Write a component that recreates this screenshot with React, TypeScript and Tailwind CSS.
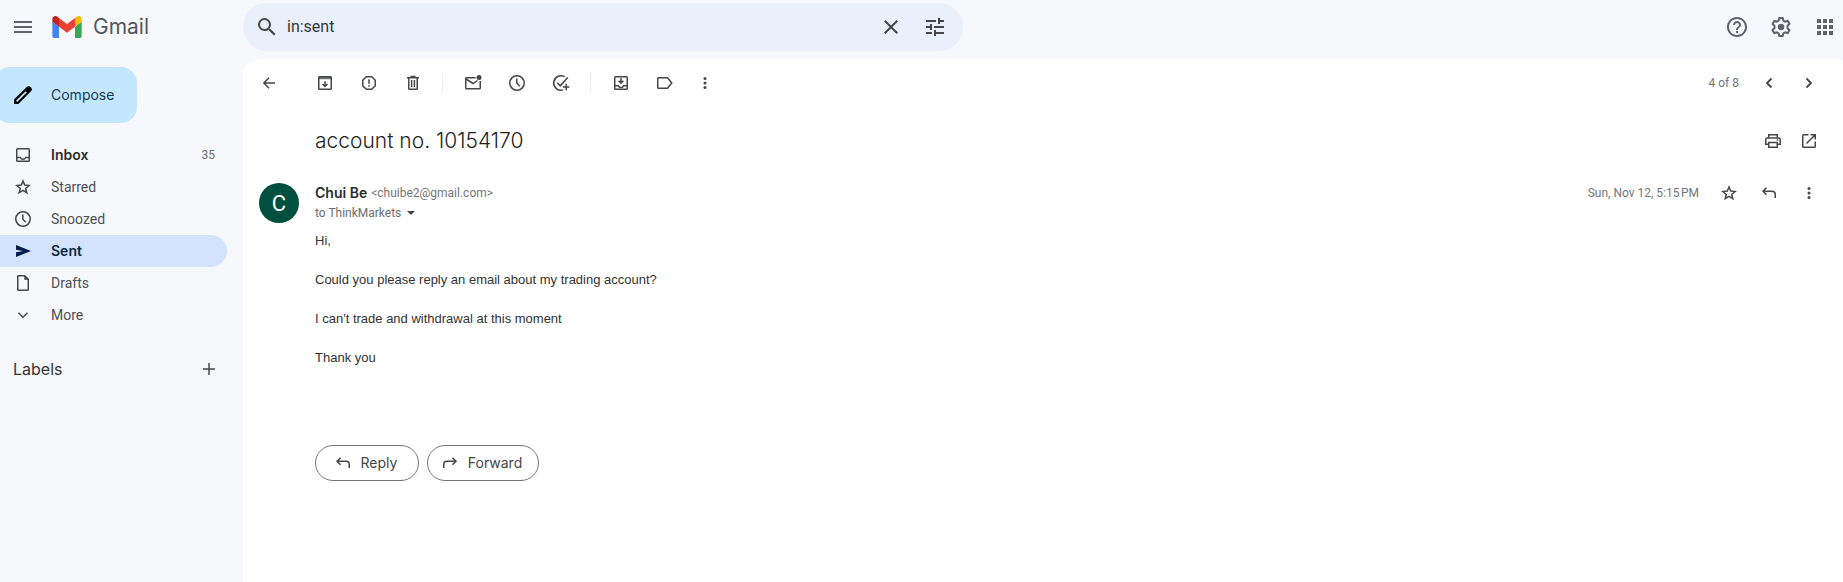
import React, { useState } from "react";
import {
  MdApps,
  MdClose,
  MdMenu,
  MdSearch,
  MdTune,
  MdHelpOutline,
} from "react-icons/md";

const Icon = ({ children }: { children: React.ReactNode }) => (
  <svg
    viewBox="0 0 20 20"
    className="size-5 shrink-0"
    fill="none"
    stroke="currentColor"
    strokeWidth="1.5"
    aria-hidden="true"
  >
    {children}
  </svg>
);

const GmailLogo = () => (
  <svg viewBox="52 42 88 66" className="w-[30px] h-[22px]" aria-hidden="true">
    <path fill="#4285f4" d="M58 108h14V74L52 59v43c0 3.32 2.69 6 6 6" />
    <path fill="#34a853" d="M120 108h14c3.32 0 6-2.69 6-6V59l-20 15" />
    <path fill="#fbbc04" d="M120 48v26l20-15v-8c0-7.42-8.47-11.65-14.4-7.2" />
    <path fill="#ea4335" d="M72 74V48l24 18 24-18v26L96 92" />
    <path fill="#c5221f" d="M52 51v8l20 15V48l-5.6-4.2c-5.94-4.45-14.4-.22-14.4 7.2" />
  </svg>
);

const PencilIcon = () => (
  <svg viewBox="0 0 24 24" className="size-6" aria-hidden="true">
    <path d="M3 21v-4.4L16.2 3.6a2 2 0 0 1 2.8 0l1.4 1.4a2 2 0 0 1 0 2.8L7.4 21z" fill="#000" />
    <path d="M5.6 18.4 15.2 8.8" stroke="#c2e7ff" strokeWidth="1.7" />
  </svg>
);

const SettingsIcon = () => (
  <svg viewBox="0 0 24 24" className="size-6" fill="none" stroke="currentColor" strokeWidth="2" aria-hidden="true">
    <path
      strokeLinejoin="round"
      d="M10.2 3h3.6l.5 2.6 1.9 1.1 2.5-.9 1.8 3.1-2 1.8v2.6l2 1.8-1.8 3.1-2.5-.9-1.9 1.1-.5 2.6h-3.6l-.5-2.6-1.9-1.1-2.5.9-1.8-3.1 2-1.8v-2.6l-2-1.8 1.8-3.1 2.5.9 1.9-1.1z"
    />
    <circle cx="12" cy="12" r="3.3" fill="currentColor" stroke="none" />
  </svg>
);

const InboxIcon = () => (
  <Icon>
    <rect x="3.75" y="3.75" width="12.5" height="12.5" rx="0.8" />
    <path d="M4 12.5h3.3c.5 1.2 1.5 1.8 2.7 1.8s2.2-.6 2.7-1.8H16" />
  </Icon>
);

const StarIcon = () => (
  <Icon>
    <path d="m10 4 1.7 4.1 4.4.4-3.4 2.9 1.1 4.3-3.8-2.3-3.8 2.3 1.1-4.3-3.4-2.9 4.4-.4z" />
  </Icon>
);

const ClockIcon = () => (
  <Icon>
    <circle cx="10" cy="10" r="7.25" />
    <path d="M9.8 5.5v4.8l3 3" />
  </Icon>
);

const SentIcon = () => (
  <Icon>
    <path d="M3 4v4.7L10 10l-7 1.3V16l15-6z" fill="currentColor" stroke="none" />
  </Icon>
);

const DraftIcon = () => (
  <Icon>
    <path d="M4.75 3.5c0-.4.3-.75.75-.75h6.2l3.55 3.6V16.5c0 .4-.3.75-.75.75h-9c-.4 0-.75-.3-.75-.75z" />
    <path d="M11.3 2.5v4.3h4.3z" fill="currentColor" stroke="none" />
  </Icon>
);

const ChevronDownIcon = () => (
  <Icon>
    <path d="m5.5 7.7 4.5 4.5 4.5-4.5" />
  </Icon>
);

const PlusIcon = () => (
  <Icon>
    <path d="M10 4v12M4 10h12" />
  </Icon>
);

const BackIcon = () => (
  <Icon>
    <path d="M16 10H5.2M10 4.7 4.9 10l5.1 5.3" />
  </Icon>
);

const ArchiveIcon = () => (
  <Icon>
    <rect x="3.75" y="3.75" width="12.5" height="12.5" rx="0.8" />
    <path d="M3.5 5h13" strokeWidth="2.5" opacity="0.75" />
    <path d="M10 8.2v5M7.5 11l2.5 2.5 2.5-2.5" />
  </Icon>
);

const SpamIcon = () => (
  <Icon>
    <path d="M7.3 3.75h5.4l3.55 3.55v5.4l-3.55 3.55H7.3L3.75 12.7V7.3z" strokeLinejoin="round" />
    <path d="M10 6.2v4.6M10 12.2v1.5" />
  </Icon>
);

const TrashIcon = () => (
  <Icon>
    <path d="M4 4.75h12M7.5 3.6h5" />
    <path d="M5.75 5v10.5c0 .4.3.75.75.75h7c.4 0 .75-.3.75-.75V5M8.6 7v7M11.4 7v7" />
  </Icon>
);

const MarkUnreadIcon = () => (
  <Icon>
    <path d="M12.5 4.75h-9c-.4 0-.75.3-.75.75V15c0 .4.3.75.75.75h13c.4 0 .75-.3.75-.75V8" />
    <path d="m3 6 7 4.5L14.5 7.5" />
    <circle cx="16" cy="4.5" r="2.5" fill="currentColor" stroke="none" />
  </Icon>
);

const AddTaskIcon = () => (
  <Icon>
    <path d="M13.6 3.7a7.25 7.25 0 1 0-1.5 13.2M6.2 9.8l3 3 7.6-8.4M15.2 10.8v6.4M12 14h6.4" />
  </Icon>
);

const MoveToIcon = () => (
  <Icon>
    <rect x="3.75" y="3.75" width="12.5" height="12.5" rx="0.8" />
    <path d="M4 12.75h3.3c.5 1.2 1.5 1.8 2.7 1.8s2.2-.6 2.7-1.8H16M10 5v4.5M7.6 7.7l2.4 2.4 2.4-2.4" />
  </Icon>
);

const LabelIcon = () => (
  <Icon>
    <path d="M3.5 4.75h9L16.75 10l-4.25 5.25h-9c-.4 0-.75-.3-.75-.75v-9c0-.4.3-.75.75-.75z" />
  </Icon>
);

const MoreIcon = () => (
  <Icon>
    <g fill="currentColor" stroke="none">
      <circle cx="10" cy="5.5" r="1.5" />
      <circle cx="10" cy="10" r="1.5" />
      <circle cx="10" cy="14.5" r="1.5" />
    </g>
  </Icon>
);

const PrevIcon = () => (
  <Icon>
    <path d="M12.5 5.5 8 10l4.5 4.5" strokeWidth="1.8" />
  </Icon>
);

const NextIcon = () => (
  <Icon>
    <path d="m7.5 5.5 4.5 4.5-4.5 4.5" strokeWidth="1.8" />
  </Icon>
);

const PrintIcon = () => (
  <Icon>
    <path d="M5.75 7V3.75h8.5V7M5.5 13.25H2.75V8.5c0-.8.6-1.5 1.5-1.5h11.5c.9 0 1.5.7 1.5 1.5v4.75H14.5" />
    <path d="M5.75 11.5h8.5v4.75h-8.5z" />
    <path d="M13.8 9h1.5" />
  </Icon>
);

const OpenIcon = () => (
  <Icon>
    <path d="M9.5 3.75h-5c-.4 0-.75.3-.75.75v11c0 .4.3.75.75.75h11c.4 0 .75-.3.75-.75v-5M11.5 3.75h4.75V8.5M16 4l-8.5 8.5" />
  </Icon>
);

const ReplyIcon = () => (
  <Icon>
    <path d="M7.5 4.7 4 8.25l3.5 3.55M4 8.25h9c2 0 3.25 1.3 3.25 3.25V15" />
  </Icon>
);

const ForwardIcon = () => (
  <Icon>
    <path d="M12.5 4.7 16 8.25l-3.5 3.55M16 8.25H7c-2 0-3.25 1.3-3.25 3.25V15" />
  </Icon>
);

const folders = [
  { name: "Inbox", icon: <InboxIcon />, count: 35 },
  { name: "Starred", icon: <StarIcon /> },
  { name: "Snoozed", icon: <ClockIcon /> },
  { name: "Sent", icon: <SentIcon /> },
  { name: "Drafts", icon: <DraftIcon /> },
  { name: "More", icon: <ChevronDownIcon /> },
];

const message = [
  "Hi,",
  "Could you please reply an email about my trading account?",
  "I can't trade and withdrawal at this moment",
  "Thank you",
];

function IconButton({ label, children }: { label: string; children: React.ReactNode }) {
  return (
    <button type="button" aria-label={label} className="flex shrink-0 text-[#444746]">
      {children}
    </button>
  );
}

function Header() {
  const [query, setQuery] = useState("in:sent");

  return (
    <header className="flex items-center pt-[3px] pb-2 pr-[6px] text-[#5f6368]">
      <div className="flex items-center w-[243px] shrink-0 pl-[11px]">
        <button type="button" aria-label="Main menu">
          <MdMenu className="size-6" />
        </button>
        <a href="#" className="flex items-center gap-[11px] ml-[17px]">
          <GmailLogo />
          <span className="font-['Inter',sans-serif] text-[21px] leading-6 text-[#54585c]">Gmail</span>
        </a>
      </div>
      <form
        className="flex items-center h-12 w-full max-w-[720px] pl-3 pr-4 rounded-full bg-[#e9f0fb] text-[#444746]"
        onSubmit={(e) => e.preventDefault()}
      >
        <button type="submit" aria-label="Search">
          <MdSearch className="size-6" />
        </button>
        <input
          type="text"
          aria-label="Search mail"
          value={query}
          onChange={(e) => setQuery(e.target.value)}
          className="flex-1 min-w-0 ml-2 bg-transparent outline-none text-base text-[#333638]"
        />
        <button type="button" aria-label="Clear search" onClick={() => setQuery("")}>
          <MdClose className="size-6" />
        </button>
        <button type="button" aria-label="Show search options" className="ml-5">
          <MdTune className="size-6" />
        </button>
      </form>
      <div className="flex items-center gap-5 ml-auto pl-5">
        <button type="button" aria-label="Support">
          <MdHelpOutline className="size-6" />
        </button>
        <button type="button" aria-label="Settings">
          <SettingsIcon />
        </button>
        <button type="button" aria-label="Google apps">
          <MdApps className="size-6" />
        </button>
      </div>
    </header>
  );
}

function Sidebar() {
  return (
    <aside className="w-[243px] shrink-0 pt-2 pr-4">
      <button
        type="button"
        className="flex items-center gap-4 h-14 -ml-[6px] pl-[17px] pr-[23px] rounded-2xl bg-[#c2e7ff] font-['Inter',sans-serif] text-sm text-[#1b3850]"
      >
        <PencilIcon />
        Compose
      </button>
      <nav className="mt-4">
        {folders.map(({ name, icon, count }) => (
          <a
            key={name}
            href="#"
            className={`flex items-center gap-[18px] h-8 pl-[13px] pr-3 rounded-r-full text-sm ${
              name === "Sent"
                ? "bg-[#d3e3fd] text-[#0b2545] font-semibold font-['Inter',sans-serif]"
                : count
                ? "text-[#2a2b2d] font-semibold font-['Inter',sans-serif]"
                : "text-[#4d5053]"
            }`}
          >
            <span className={name === "Sent" ? "text-[#041e49]" : "text-[#444746]"}>{icon}</span>
            {name}
            {count && (
              <span className="ml-auto text-xs font-normal text-[#6b6e71] font-['Roboto',sans-serif]">{count}</span>
            )}
          </a>
        ))}
      </nav>
      <div className="flex items-center justify-between h-8 mt-[22px] pl-[13px] pr-2">
        <h2 className="font-['Inter',sans-serif] text-base text-[#333638]">Labels</h2>
        <IconButton label="Create new label">
          <PlusIcon />
        </IconButton>
      </div>
    </aside>
  );
}

function Toolbar() {
  return (
    <div className="flex items-center h-12 pl-4 pr-6">
      <IconButton label="Back to Sent"><BackIcon /></IconButton>
      <div className="flex items-center gap-6 ml-9">
        <IconButton label="Archive"><ArchiveIcon /></IconButton>
        <IconButton label="Report spam"><SpamIcon /></IconButton>
        <IconButton label="Delete"><TrashIcon /></IconButton>
      </div>
      <div className="w-px h-5 ml-[19px] mr-5 bg-[#e8eaed]" />
      <div className="flex items-center gap-6">
        <IconButton label="Mark as unread"><MarkUnreadIcon /></IconButton>
        <IconButton label="Snooze"><ClockIcon /></IconButton>
        <IconButton label="Add to Tasks"><AddTaskIcon /></IconButton>
      </div>
      <div className="w-px h-5 ml-[19px] mr-5 bg-[#e8eaed]" />
      <div className="flex items-center gap-6">
        <IconButton label="Move to"><MoveToIcon /></IconButton>
        <IconButton label="Labels"><LabelIcon /></IconButton>
      </div>
      <div className="flex ml-5">
        <IconButton label="More"><MoreIcon /></IconButton>
      </div>
      <div className="flex items-center gap-5 ml-auto">
        <span className="text-xs text-[#737679]">4 of 8</span>
        <IconButton label="Newer"><PrevIcon /></IconButton>
        <IconButton label="Older"><NextIcon /></IconButton>
      </div>
    </div>
  );
}

function Message() {
  return (
    <article className="flex gap-4 mt-[22px] pl-4 pr-6">
      <div className="flex items-center justify-center size-10 shrink-0 rounded-full bg-[#00503f] text-white text-[22px]">
        C
      </div>
      <div className="flex-1 min-w-0">
        <div className="flex items-center h-5 gap-5">
          <div className="flex items-center gap-1 mr-auto">
            <h3 className="font-['Inter',sans-serif] text-sm font-semibold text-[#2a2b2d]">Chui Be</h3>
            <span className="text-xs text-[#737679]">&lt;chuibe2@gmail.com&gt;</span>
          </div>
          <span className="text-xs text-[#737679]">Sun, Nov 12, 5:15{"\u202f"}PM</span>
          <IconButton label="Star"><StarIcon /></IconButton>
          <IconButton label="Reply"><ReplyIcon /></IconButton>
          <IconButton label="More"><MoreIcon /></IconButton>
        </div>
        <div className="flex items-center h-5 text-xs text-[#6b6e71]">
          to ThinkMarkets
          <button type="button" aria-label="Show details" className="ml-[6px] text-[#444746]">
            <svg viewBox="0 0 8 4" className="w-2 h-1" fill="currentColor" aria-hidden="true">
              <path d="M0 0h8L4 4z" />
            </svg>
          </button>
        </div>
        <div className="flex flex-col gap-[19px] mt-2 font-['Liberation_Sans',sans-serif] text-[13px] leading-5 text-[#333]">
          {message.map((line) => (
            <p key={line}>{line}</p>
          ))}
        </div>
        <div className="flex gap-2 mt-[77px] font-['Inter',sans-serif] text-sm text-[#444746]">
          <button
            type="button"
            className="flex items-center justify-center gap-2 w-[104px] h-9 pr-1 rounded-full border border-[#747775]"
          >
            <ReplyIcon />
            Reply
          </button>
          <button
            type="button"
            className="flex items-center justify-center gap-2 w-[112px] h-9 pr-1 rounded-full border border-[#747775]"
          >
            <ForwardIcon />
            Forward
          </button>
        </div>
      </div>
    </article>
  );
}

export default function App() {
  return (
    <div className="flex flex-col min-h-screen overflow-hidden bg-[#f6f8fc] font-['Roboto',sans-serif]">
      <Header />
      <div className="flex flex-1">
        <Sidebar />
        <main className="flex-1 min-w-0 rounded-tl-2xl rounded-tr-sm bg-white">
          <Toolbar />
          <div className="flex items-center gap-4 h-10 mt-[14px] pl-[72px] pr-6">
            <h1 className="mr-auto font-['Inter',sans-serif] text-[21px] font-light leading-7 text-[#1f1f1f]">
              account no. 10154170
            </h1>
            <IconButton label="Print"><PrintIcon /></IconButton>
            <IconButton label="Open in new window"><OpenIcon /></IconButton>
          </div>
          <Message />
        </main>
      </div>
    </div>
  );
}
